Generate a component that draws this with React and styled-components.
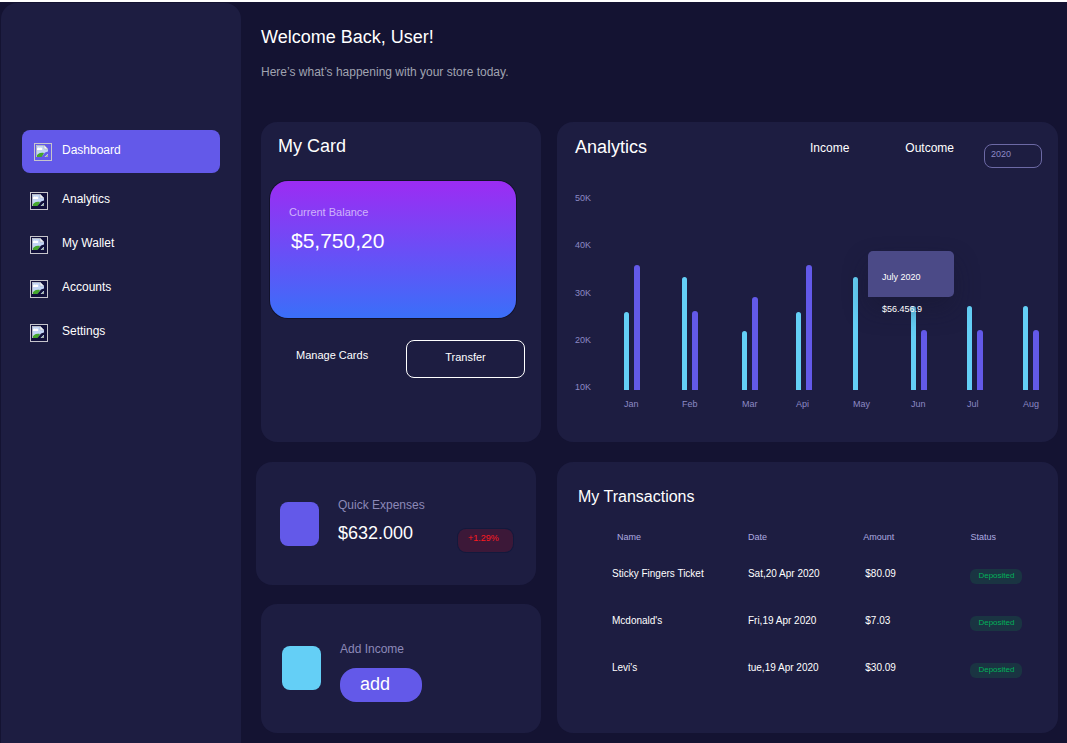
import React from 'react';
import styled, { createGlobalStyle } from 'styled-components';

const GlobalStyle = createGlobalStyle`
  *, *::before, *::after { box-sizing: border-box; }
  body {
    margin: 0;
    background: #ffffff;
    font-family: "Liberation Sans", Arial, sans-serif;
    color: #ffffff;
  }
  h1, h2, p, ul, figure { margin: 0; padding: 0; font-weight: 400; }
  button, select { font-family: inherit; cursor: pointer; }
`;

const Page = styled.div`
  display: flex;
  min-height: calc(100vh - 2px);
  margin-top: 2px;
  background: #141332;
`;

const Sidebar = styled.aside`
  flex: 0 0 240px;
  margin: 1px 0 0 1px;
  padding: 127px 21px 20px;
  border-radius: 16px 16px 0 0;
  background: #1d1d41;
`;

const NavList = styled.ul`
  list-style: none;
`;

const NavItem = styled.li`
  margin-bottom: ${(p) => (p.$active ? 6 : 0)}px;
`;

const NavLink = styled.a`
  display: grid;
  grid-template-columns: ${(p) => (p.$active ? '28px' : '32px')} 1fr;
  align-items: start;
  height: ${(p) => (p.$active ? 43 : 44)}px;
  padding: 12px 8px 0 ${(p) => (p.$active ? 12 : 8)}px;
  border-radius: 8px;
  background: ${(p) => (p.$active ? '#6359e9' : 'transparent')};
  color: #ffffff;
  font-size: 12px;
  line-height: 16px;
  text-decoration: none;
`;

const NavIcon = styled.svg`
  display: block;
  width: 18px;
  height: 18px;
  margin-top: 1px;
`;

const Main = styled.main`
  flex: 1;
  min-width: 0;
  padding: 24px 9px 10px 15px;
`;

const Header = styled.header`
  display: flex;
  flex-direction: column;
  gap: 16px;
  padding-left: 5px;
  margin-bottom: 42px;
`;

const Title = styled.h1`
  font-size: 18px;
  line-height: 22px;
`;

const Subtitle = styled.p`
  font-size: 12px;
  line-height: 16px;
  color: #a0a3b1;
`;

const Board = styled.div`
  display: grid;
  grid-template-columns: 285px minmax(0, 1fr);
  grid-template-rows: minmax(320px, auto) auto;
  gap: 20px 16px;
`;

const Panel = styled.section`
  border-radius: 16px;
  background: #1d1d41;
`;

const PanelTitle = styled.h2`
  font-size: ${(p) => (p.$small ? 16 : 18)}px;
  line-height: 22px;
`;

const CardPanel = styled(Panel)`
  width: 280px;
  margin-left: auto;
  padding: 13px 16px 0 9px;

  ${PanelTitle} { padding-left: 8px; }
`;

const BalanceCard = styled.div`
  width: 246px;
  height: 137px;
  margin-top: 24px;
  padding: 23px 19px;
  border-radius: 18px;
  background: linear-gradient(180deg, #9c2cf3 0%, #3a6ff9 100%);
  box-shadow: 0 0 0 1px #12122c;
`;

const BalanceLabel = styled.p`
  font-size: 11px;
  line-height: 16px;
  color: rgba(255, 255, 255, 0.62);
`;

const BalanceAmount = styled.p`
  margin-top: 8px;
  padding-left: 2px;
  font-size: 21px;
  line-height: 26px;
`;

const CardActions = styled.div`
  display: flex;
  justify-content: space-between;
  align-items: flex-start;
  margin-top: 22px;
  padding-left: 26px;
`;

const TextButton = styled.button`
  padding: 0;
  border: 0;
  background: none;
  color: #ffffff;
  font-size: ${(p) => (p.$large ? 12 : 11)}px;
  line-height: 16px;
`;

const ManageButton = styled(TextButton)`
  margin-top: 7px;
`;

const TransferButton = styled(TextButton)`
  width: 119px;
  height: 38px;
  padding-bottom: 4px;
  border: 1px solid #ffffff;
  border-radius: 8px;
`;

const AnalyticsPanel = styled(Panel)`
  display: flex;
  flex-direction: column;
  padding: 14px 16px 30px 18px;
`;

const AnalyticsHead = styled.div`
  display: flex;
  align-items: flex-start;
`;

const Legend = styled.div`
  display: flex;
  gap: 56px;
  margin: 4px 30px 0 auto;
`;

const YearSelect = styled.select`
  appearance: none;
  width: 58px;
  height: 24px;
  margin-top: 8px;
  padding: 0 6px 5px;
  border: 1px solid #6c69a5;
  border-radius: 8px;
  background: transparent;
  color: #8c89c4;
  font-size: 9px;
  line-height: 12px;
`;

const Chart = styled.figure`
  display: flex;
  margin-top: 24px;
  padding-right: 1px;
`;

const Scale = styled.div`
  display: flex;
  flex-direction: column;
  justify-content: space-between;
  width: 49px;
  height: 201px;
  font-size: 9px;
  line-height: 12px;
  color: #8c89c4;
`;

const Plot = styled.div`
  position: relative;
  flex: 1;
  display: grid;
  grid-template-columns: 58fr 60fr 54fr 57fr 58fr 56fr 56fr 18px;
`;

const Month = styled.div`
  width: 18px;
  font-size: 9px;
  line-height: 12px;
  color: #8c89c4;
  white-space: nowrap;
`;

const Bars = styled.div`
  display: flex;
  align-items: flex-end;
  gap: 5px;
  height: 198px;
  margin-bottom: 8px;
`;

const Bar = styled.div`
  width: ${(p) => (p.$outcome ? 6 : 5)}px;
  border-radius: 3px 3px 0 0;
  background: ${(p) => (p.$outcome ? '#6359e9' : '#64cff6')};
`;

const Tooltip = styled.div`
  position: absolute;
  top: 59px;
  right: 87px;
  width: 86px;
  height: 46px;
  padding: 20px 14px 0;
  border-radius: 5px 5px 5px 0;
  background: #4b4a87;
  box-shadow: 0 12px 24px rgba(22, 22, 45, 0.4);
  font-size: 9px;
  line-height: 12px;
  white-space: nowrap;

  p + p { margin-top: 20px; }
`;

const Widgets = styled.div`
  display: flex;
  flex-direction: column;
  gap: 19px;
`;

const Widget = styled(Panel)`
  display: flex;
  align-items: flex-start;
  width: 280px;
`;

const ExpenseWidget = styled(Widget)`
  height: 123px;
  padding: 35px 23px 0 24px;
`;

const IncomeWidget = styled(Widget)`
  align-self: flex-end;
  height: 129px;
  padding: 37px 23px 0 21px;
`;

const Swatch = styled.div`
  width: 39px;
  height: 44px;
  margin: 5px 19px 0 0;
  border-radius: 8px;
  background: ${(p) => p.$color};
`;

const WidgetLabel = styled.p`
  font-size: 12px;
  line-height: 16px;
  color: #8c89b8;
`;

const WidgetValue = styled.p`
  margin-top: 9px;
  font-size: 18px;
  line-height: 22px;
`;

const Change = styled.span`
  width: 55px;
  height: 23px;
  margin: 32px 0 0 auto;
  padding: 3px 10px;
  border-radius: 8px;
  background: #3c1838;
  box-shadow: 0 0 0 1px #13193c;
  color: #ff1a1f;
  font-size: 9px;
  line-height: 12px;
`;

const AddButton = styled.button`
  display: block;
  width: 82px;
  height: 34px;
  margin-top: 11px;
  padding: 0 20px 2px;
  border: 0;
  border-radius: 16px;
  background: #6359e9;
  color: #ffffff;
  font-size: 18px;
  line-height: 22px;
  text-align: left;
`;

const TransactionsPanel = styled(Panel)`
  padding: 24px 34px 20px 21px;
`;

const Table = styled.table`
  width: calc(100% - 34px);
  margin: 16px 0 0 34px;
  border-collapse: collapse;
  table-layout: fixed;
  font-size: 10px;
  line-height: 12px;
  text-align: left;
`;

const Th = styled.th`
  width: ${(p) => p.$width};
  height: 26px;
  padding: 0 0 0 ${(p) => p.$indent || 0}px;
  font-size: 9px;
  font-weight: 400;
  color: #aeabe0;
`;

const Td = styled.td`
  height: 47px;
  padding: 0 0 0 ${(p) => p.$indent || 0}px;
  white-space: nowrap;
`;

const Status = styled.span`
  display: block;
  width: 52px;
  height: 15px;
  margin-top: 5px;
  border-radius: 6px;
  background: #1a3442;
  color: #02b15a;
  font-size: 8px;
  line-height: 13px;
  text-align: center;
`;

const navItems = ['Dashboard', 'Analytics', 'My Wallet', 'Accounts', 'Settings'];

const months = [
  { name: 'Jan', income: 78, outcome: 125 },
  { name: 'Feb', income: 113, outcome: 79 },
  { name: 'Mar', income: 59, outcome: 93 },
  { name: 'Api', income: 78, outcome: 125 },
  { name: 'May', income: 113 },
  { name: 'Jun', income: 84, outcome: 60 },
  { name: 'Jul', income: 84, outcome: 60 },
  { name: 'Aug', income: 84, outcome: 60 },
];

const transactions = [
  { name: 'Sticky Fingers Ticket', date: 'Sat,20 Apr 2020', amount: '$80.09' },
  { name: "Mcdonald's", date: 'Fri,19 Apr 2020', amount: '$7.03' },
  { name: "Levi's", date: 'tue,19 Apr 2020', amount: '$30.09' },
];

function PictureIcon({ active }) {
  return (
    <NavIcon viewBox="0 0 18 18" aria-hidden="true">
      <rect x="0.5" y="0.5" width="17" height="17" fill={active ? 'none' : '#11103a'} stroke="#c6c5cc" />
      <path d="M2 2h8l4 4v8H2z" fill="#c3d5f5" />
      <path d="M3 7c-.5-2 1.500-3 2.500-2C7 3.500 9 5 8 7z" fill="#ffffff" />
      <path d="M2 14c1-3 4-5 8-4l-2 4z" fill="#45a72c" />
      <path d="M2.500 14V2.500H10" fill="none" stroke="#b4bac6" strokeWidth="1" />
      <path d="M10 2l4 4h-4z" fill="#f4f6fa" stroke="#9da3ae" strokeWidth="0.500" />
      <path d="M14 8.500L11 9.500L7.500 14h3l3.500-3.500z" fill={active ? '#6359e9' : '#11103a'} />
      <path d="M14 11.500V14h-2.500z" fill="#9fae9a" />
    </NavIcon>
  );
}

export default function App() {
  return (
    <>
      <GlobalStyle />
      <Page>
        <Sidebar>
          <nav>
            <NavList>
              {navItems.map((label, i) => (
                <NavItem key={label} $active={i === 0}>
                  <NavLink href="#" $active={i === 0}>
                    <PictureIcon active={i === 0} />
                    {label}
                  </NavLink>
                </NavItem>
              ))}
            </NavList>
          </nav>
        </Sidebar>
        <Main>
          <Header>
            <Title>Welcome Back, User!</Title>
            <Subtitle>Here’s what’s happening with your store today.</Subtitle>
          </Header>
          <Board>
            <CardPanel>
              <PanelTitle>My Card</PanelTitle>
              <BalanceCard>
                <BalanceLabel>Current Balance</BalanceLabel>
                <BalanceAmount>$5,750,20</BalanceAmount>
              </BalanceCard>
              <CardActions>
                <ManageButton type="button">Manage Cards</ManageButton>
                <TransferButton type="button">Transfer</TransferButton>
              </CardActions>
            </CardPanel>

            <AnalyticsPanel>
              <AnalyticsHead>
                <PanelTitle>Analytics</PanelTitle>
                <Legend>
                  <TextButton type="button" $large>Income</TextButton>
                  <TextButton type="button" $large>Outcome</TextButton>
                </Legend>
                <YearSelect aria-label="Year" defaultValue="2020">
                  <option>2020</option>
                </YearSelect>
              </AnalyticsHead>
              <Chart>
                <Scale>
                  {['50K', '40K', '30K', '20K', '10K'].map((v) => (
                    <span key={v}>{v}</span>
                  ))}
                </Scale>
                <Plot>
                  {months.map((m) => (
                    <Month key={m.name}>
                      <Bars>
                        <Bar style={{ height: m.income }} />
                        {m.outcome && <Bar $outcome style={{ height: m.outcome }} />}
                      </Bars>
                      {m.name}
                    </Month>
                  ))}
                  <Tooltip>
                    <p>July 2020</p>
                    <p>$56.456.9</p>
                  </Tooltip>
                </Plot>
              </Chart>
            </AnalyticsPanel>

            <Widgets>
              <ExpenseWidget>
                <Swatch $color="#6359e9" />
                <div>
                  <WidgetLabel>Quick Expenses</WidgetLabel>
                  <WidgetValue>$632.000</WidgetValue>
                </div>
                <Change>+1.29%</Change>
              </ExpenseWidget>
              <IncomeWidget>
                <Swatch $color="#64cff6" />
                <div>
                  <WidgetLabel>Add Income</WidgetLabel>
                  <AddButton type="button">add</AddButton>
                </div>
              </IncomeWidget>
            </Widgets>

            <TransactionsPanel>
              <PanelTitle $small>My Transactions</PanelTitle>
              <Table>
                <thead>
                  <tr>
                    <Th $width="33%" $indent={5}>Name</Th>
                    <Th $width="28%">Date</Th>
                    <Th $width="26%">Amount</Th>
                    <Th $width="13%">Status</Th>
                  </tr>
                </thead>
                <tbody>
                  {transactions.map((t) => (
                    <tr key={t.name}>
                      <Td>{t.name}</Td>
                      <Td>{t.date}</Td>
                      <Td $indent={2}>{t.amount}</Td>
                      <Td><Status>Deposited</Status></Td>
                    </tr>
                  ))}
                </tbody>
              </Table>
            </TransactionsPanel>
          </Board>
        </Main>
      </Page>
    </>
  );
}
